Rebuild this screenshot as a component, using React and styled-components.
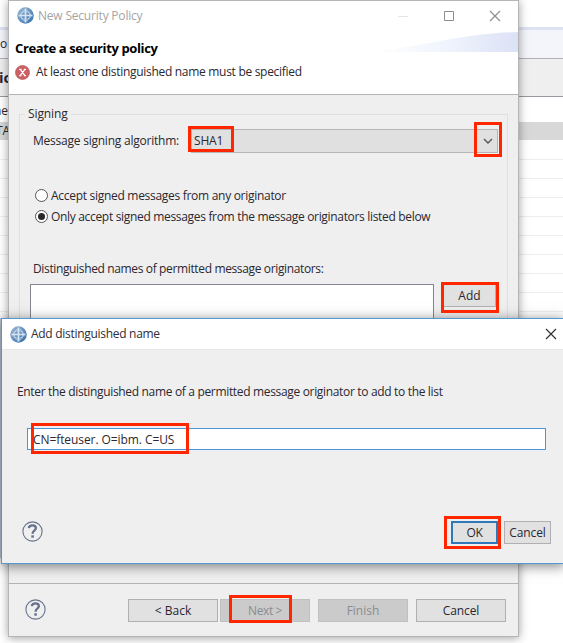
import React from 'react';
import styled, { createGlobalStyle } from 'styled-components';

const GlobalStyle = createGlobalStyle`
  * { box-sizing: border-box; }
  body { margin: 0; overflow: hidden; background: #fff; }
`;

const Desktop = styled.main`
  position: relative;
  width: 563px;
  height: 643px;
  overflow: hidden;
  background: #fff;
  color: #2b2730;
  font: 12px/18px "Open Sans", "Noto Sans", sans-serif;
`;

const Workbench = styled.div`
  display: flex;
  flex-direction: column;
  height: 643px;
`;
const WorkbenchBand = styled.div`
  flex: none;
  height: ${p => p.$h}px;
  padding-top: ${p => p.$pad || 0}px;
  white-space: nowrap;
  background: ${p => p.$bg || '#fff'};
  border-bottom: ${p => (p.$line ? `1px solid ${p.$line}` : 'none')};
  font-size: ${p => p.$size || 12}px;
  font-weight: ${p => (p.$bold ? 700 : 400)};
`;
const WorkbenchText = styled.span`
  display: block;
  margin-left: ${p => p.$shift || 0}px;
`;

const Window = styled.section`
  position: absolute;
  left: ${p => p.$x}px;
  top: ${p => p.$y}px;
  width: ${p => p.$w}px;
  height: ${p => p.$h}px;
  display: flex;
  flex-direction: column;
  background: #efefef;
  border: 1px solid ${p => p.$border};
  box-shadow: ${p => p.$shadow};
`;
const TitleBar = styled.header`
  display: flex;
  flex: none;
  align-items: center;
  height: ${p => p.$h}px;
  padding: ${p => p.$pad};
  gap: 4px;
  background: #fff;
  color: ${p => p.$color};
`;
const WindowControls = styled.div`
  display: flex;
  gap: 34px;
  margin-left: auto;
`;
const Label = styled.span`
  white-space: pre;
  letter-spacing: ${p => p.$ls || 0}px;
`;
const Banner = styled.div`
  flex: none;
  height: 65px;
  background: #fff;
  border-bottom: 1px solid #b4b4b4;
`;
const BannerTop = styled.div`
  display: flex;
  justify-content: space-between;
  height: 33px;
`;
const BannerTitle = styled.h1`
  margin: 9px 0 0 6px;
  color: #000;
  font-size: 13px;
  line-height: 18px;
  white-space: nowrap;
  letter-spacing: -0.38px;
`;
const ErrorLine = styled.div`
  display: flex;
  align-items: center;
  height: 18px;
  gap: 6px;
  padding-left: 6px;
`;
const Body = styled.div`
  flex: 1;
  padding: 19px 10px 0;
`;
const Group = styled.fieldset`
  height: 440px;
  min-width: 0;
  margin: -9px 0 0;
  padding: 0 9px 0 10px;
  border: 1px solid #dfdfdf;
`;
const Legend = styled.legend`
  margin-left: -5px;
  padding: 0 3px;
  line-height: 18px;
`;
const AlgorithmRow = styled.div`
  display: flex;
  align-items: center;
  margin-top: 6px;
  padding-left: 3px;
`;
const Combo = styled.div`
  display: flex;
  align-items: center;
  justify-content: space-between;
  width: 307px;
  height: 24px;
  margin-left: auto;
  padding: 0 4px 0 2px;
  background: #e0e0e0;
  border: 1px solid #b5b5b5;
`;
const RadioGroup = styled.div`
  display: flex;
  flex-direction: column;
  margin: 32px 0 0 5px;
`;
const RadioRow = styled.div`
  display: flex;
  align-items: center;
  height: 21px;
  gap: 3px;
`;
const RadioMark = styled.span`
  display: grid;
  place-items: center;
  width: 13px;
  height: 13px;
  border: 1px solid #555;
  border-radius: 50%;
  background: #fff;
  &::after {
    content: '';
    width: 7px;
    height: 7px;
    border-radius: 50%;
    background: ${p => (p.$checked ? '#282828' : 'transparent')};
  }
`;
const ListCaption = styled.div`
  margin: 33px 0 6px 3px;
`;
const ListRow = styled.div`
  display: flex;
  gap: 9px;
`;
const ListBox = styled.div`
  width: 404px;
  height: 120px;
  background: #fff;
  border: 1px solid #868691;
`;
const Footer = styled.footer`
  display: flex;
  flex: none;
  height: 53px;
  padding: 15px 12px 0 16px;
  border-top: 1px solid #b4b4b4;
`;
const ButtonRow = styled.div`
  display: flex;
  gap: ${p => p.$gap}px;
  margin-left: auto;
`;
const Button = styled.button`
  display: flex;
  align-items: center;
  justify-content: center;
  width: ${p => p.$w || 90}px;
  height: 23px;
  padding: 0;
  font: inherit;
  color: ${p => (p.disabled ? '#8b8b8e' : '#2b2730')};
  background: ${p => (p.disabled ? '#cbcbcb' : '#e1e1e1')};
  border: ${p => (p.$primary ? '2px solid #2f78b8' : `1px solid ${p.disabled ? '#c0c0c0' : '#b0b0b2'}`)};
`;
const DialogBody = styled.div`
  display: flex;
  flex: 1;
  flex-direction: column;
  padding: 33px 13px 19px 15px;
  border-top: 1px solid #e8e8e8;
`;
const TextField = styled.div`
  display: flex;
  align-items: center;
  width: 519px;
  height: 22px;
  margin: 27px 0 0 10px;
  padding: 1px 0 0 5px;
  background: #fff;
  border: 1px solid #4d94d8;
  color: #302730;
`;
const DialogFooter = styled.div`
  display: flex;
  margin-top: auto;
  padding-left: 5px;
`;
const Highlight = styled.div`
  position: absolute;
  left: ${p => p.$x}px;
  top: ${p => p.$y}px;
  width: ${p => p.$w}px;
  height: ${p => p.$h}px;
  border: 3px solid #ff2600;
`;
const Icon = styled.svg`
  display: block;
  flex: none;
`;

const Globe = ({ id }) => (
  <Icon width="17" height="17" viewBox="0 0 17 17">
    <defs>
      <linearGradient id={id} x1="0" y1="0" x2="1" y2="1">
        <stop offset="0" stopColor="#9db9d6" />
        <stop offset="1" stopColor="#326eaa" />
      </linearGradient>
    </defs>
    <circle cx="8.5" cy="8.5" r="8.3" fill={`url(#${id})`} />
    <g fill="none" stroke="#d5e3f0">
      <ellipse cx="8.5" cy="8.5" rx="4.2" ry="5.5" strokeWidth=".7" />
      <ellipse cx="8.5" cy="8.5" rx="5.6" ry="3.7" strokeWidth=".7" />
      <path d="M8.5 1.5v14M1.5 8.5h14" strokeWidth="1.7" />
    </g>
  </Icon>
);
const Help = () => (
  <Icon width="21" height="21" viewBox="0 0 21 21" fill="none" stroke="#66728c">
    <circle cx="10.5" cy="10.5" r="9.6" strokeWidth="1.1" />
    <path d="M6.8 7.1c.3-2 1.7-2.8 3.6-2.8 2.1 0 3.5 1 3.5 2.8 0 2.5-3.2 2.4-3.2 5v.7" strokeWidth="2.3" />
    <path d="M10.6 14.3v2.4" strokeWidth="2.6" />
  </Icon>
);
const ErrorIcon = () => (
  <Icon width="15" height="15" viewBox="0 0 15 15">
    <circle cx="7.5" cy="7.5" r="7" fill="#cb6063" stroke="#b9585c" strokeWidth=".7" />
    <path d="m5.2 4.3 4.8 6.4M10 4.3l-4.8 6.4M4.2 4.4h2.4M8.8 4.4h2.2M4.2 10.6h2.2M8.8 10.6H11" fill="none" stroke="#fff" strokeWidth="1.2" />
  </Icon>
);
const Minimize = () => <Icon width="12" height="12"><path d="M1 6.5h10" stroke="#e5e5e5" /></Icon>;
const Maximize = () => <Icon width="12" height="12"><path d="M1.5 1.5h9v9h-9z" fill="none" stroke="#8e8e8e" /></Icon>;
const Close = ({ color }) => <Icon width="12" height="12"><path d="m1 1 10 10M11 1 1 11" stroke={color} strokeWidth="1.2" /></Icon>;
const Chevron = () => <Icon width="10" height="8"><path d="m1 2 4 4 4-4" fill="none" stroke="#555" strokeWidth="1.4" /></Icon>;
const Swoosh = () => (
  <Icon width="144" height="22" viewBox="0 0 144 22">
    <defs>
      <linearGradient id="swoosh">
        <stop offset="0" stopColor="#fff" />
        <stop offset=".5" stopColor="#f0f4fd" />
        <stop offset="1" stopColor="#dce2f6" />
      </linearGradient>
    </defs>
    <path d="M0 22C50 16 85 4 144 2v20z" fill="url(#swoosh)" />
  </Icon>
);

const emptyRows = [0, 1, 2, 3, 4, 5, 6, 7];
const highlights = [
  [188, 126, 46, 26], [474, 122, 28, 35], [441, 282, 58, 31],
  [31, 423, 158, 31], [229, 595, 63, 28], [444, 516, 57, 33],
];

export default function App() {
  return (
    <Desktop>
      <GlobalStyle />
      <Workbench>
        <WorkbenchBand $h={27} />
        <WorkbenchBand $h={3} $bg="#dde3f3" />
        <WorkbenchBand $h={29} $bg="#f3f5fb" $line="#b0b0b5" $pad={5}><WorkbenchText>or</WorkbenchText></WorkbenchBand>
        <WorkbenchBand $h={38} $bg="#efefef" $line="#9898a0" $pad={9} $size={15} $bold><WorkbenchText $shift={-1}>ic</WorkbenchText></WorkbenchBand>
        <WorkbenchBand $h={25} $pad={5}><WorkbenchText $shift={-6}>ne</WorkbenchText></WorkbenchBand>
        <WorkbenchBand $h={18} $bg="#d8d8d8"><WorkbenchText $shift={-4}>TA</WorkbenchText></WorkbenchBand>
        <WorkbenchBand $h={20} $line="#eee" />
        {emptyRows.map(i => <WorkbenchBand key={i} $h={19} $line="#eee" />)}
        <WorkbenchBand $h={6} />
        <WorkbenchBand $h={240} $bg="#c3d3e6" />
      </Workbench>

      <Window $x={8} $y={0} $w={511} $h={637} $border="#b5b5b5" $shadow="0 1px 9px rgba(0,0,0,.38)">
        <TitleBar $h={29} $pad="0 17px 0 8px" $color="#a4a4a4">
          <Globe id="globe-main" />
          <Label $ls={-0.2}>New Security Policy</Label>
          <WindowControls><Minimize /><Maximize /><Close color="#8e8e8e" /></WindowControls>
        </TitleBar>
        <Banner>
          <BannerTop><BannerTitle>Create a security policy</BannerTitle><Swoosh /></BannerTop>
          <ErrorLine><ErrorIcon /><Label $ls={-0.3}>At least one distinguished name must be specified</Label></ErrorLine>
        </Banner>
        <Body>
          <Group>
            <Legend><Label $ls={-0.1}>Signing</Label></Legend>
            <AlgorithmRow>
              <Label $ls={-0.23}>Message signing algorithm:</Label>
              <Combo><Label $ls={-0.2}>SHA1</Label><Chevron /></Combo>
            </AlgorithmRow>
            <RadioGroup>
              <RadioRow><RadioMark /><Label $ls={-0.29}>Accept signed messages from any originator</Label></RadioRow>
              <RadioRow><RadioMark $checked /><Label $ls={-0.32}>Only accept signed messages from the message originators listed below</Label></RadioRow>
            </RadioGroup>
            <ListCaption><Label $ls={-0.36}>Distinguished names of permitted message originators:</Label></ListCaption>
            <ListRow><ListBox /><Button $w={53}><Label>Add</Label></Button></ListRow>
          </Group>
        </Body>
        <Footer>
          <Help />
          <ButtonRow $gap={8}>
            <ButtonRow $gap={2}>
              <Button><Label>&lt; Back</Label></Button>
              <Button disabled><Label $ls={-0.4}>Next &gt;</Label></Button>
            </ButtonRow>
            <Button disabled><Label>Finish</Label></Button>
            <Button><Label $ls={-0.1}>Cancel</Label></Button>
          </ButtonRow>
        </Footer>
      </Window>

      <Window $x={1} $y={318} $w={564} $h={246} $border="#5299d3" $shadow="0 2px 12px rgba(0,0,0,.5)">
        <TitleBar $h={30} $pad="0 7px 0 8px" $color="#302c36">
          <Globe id="globe-dialog" />
          <Label $ls={-0.29}>Add distinguished name</Label>
          <WindowControls><Close color="#333" /></WindowControls>
        </TitleBar>
        <DialogBody>
          <Label $ls={-0.33}>Enter the distinguished name of a permitted message originator to add to the list</Label>
          <TextField><Label $ls={-0.08}>CN=fteuser. O=ibm. C=US</Label></TextField>
          <DialogFooter>
            <Help />
            <ButtonRow $gap={6}>
              <Button $w={47} $primary><Label $ls={-0.3}>OK</Label></Button>
              <Button $w={47}><Label $ls={-0.1}>Cancel</Label></Button>
            </ButtonRow>
          </DialogFooter>
        </DialogBody>
      </Window>
      {highlights.map(([x, y, w, h]) => <Highlight key={`${x}-${y}`} $x={x} $y={y} $w={w} $h={h} />)}
    </Desktop>
  );
}
